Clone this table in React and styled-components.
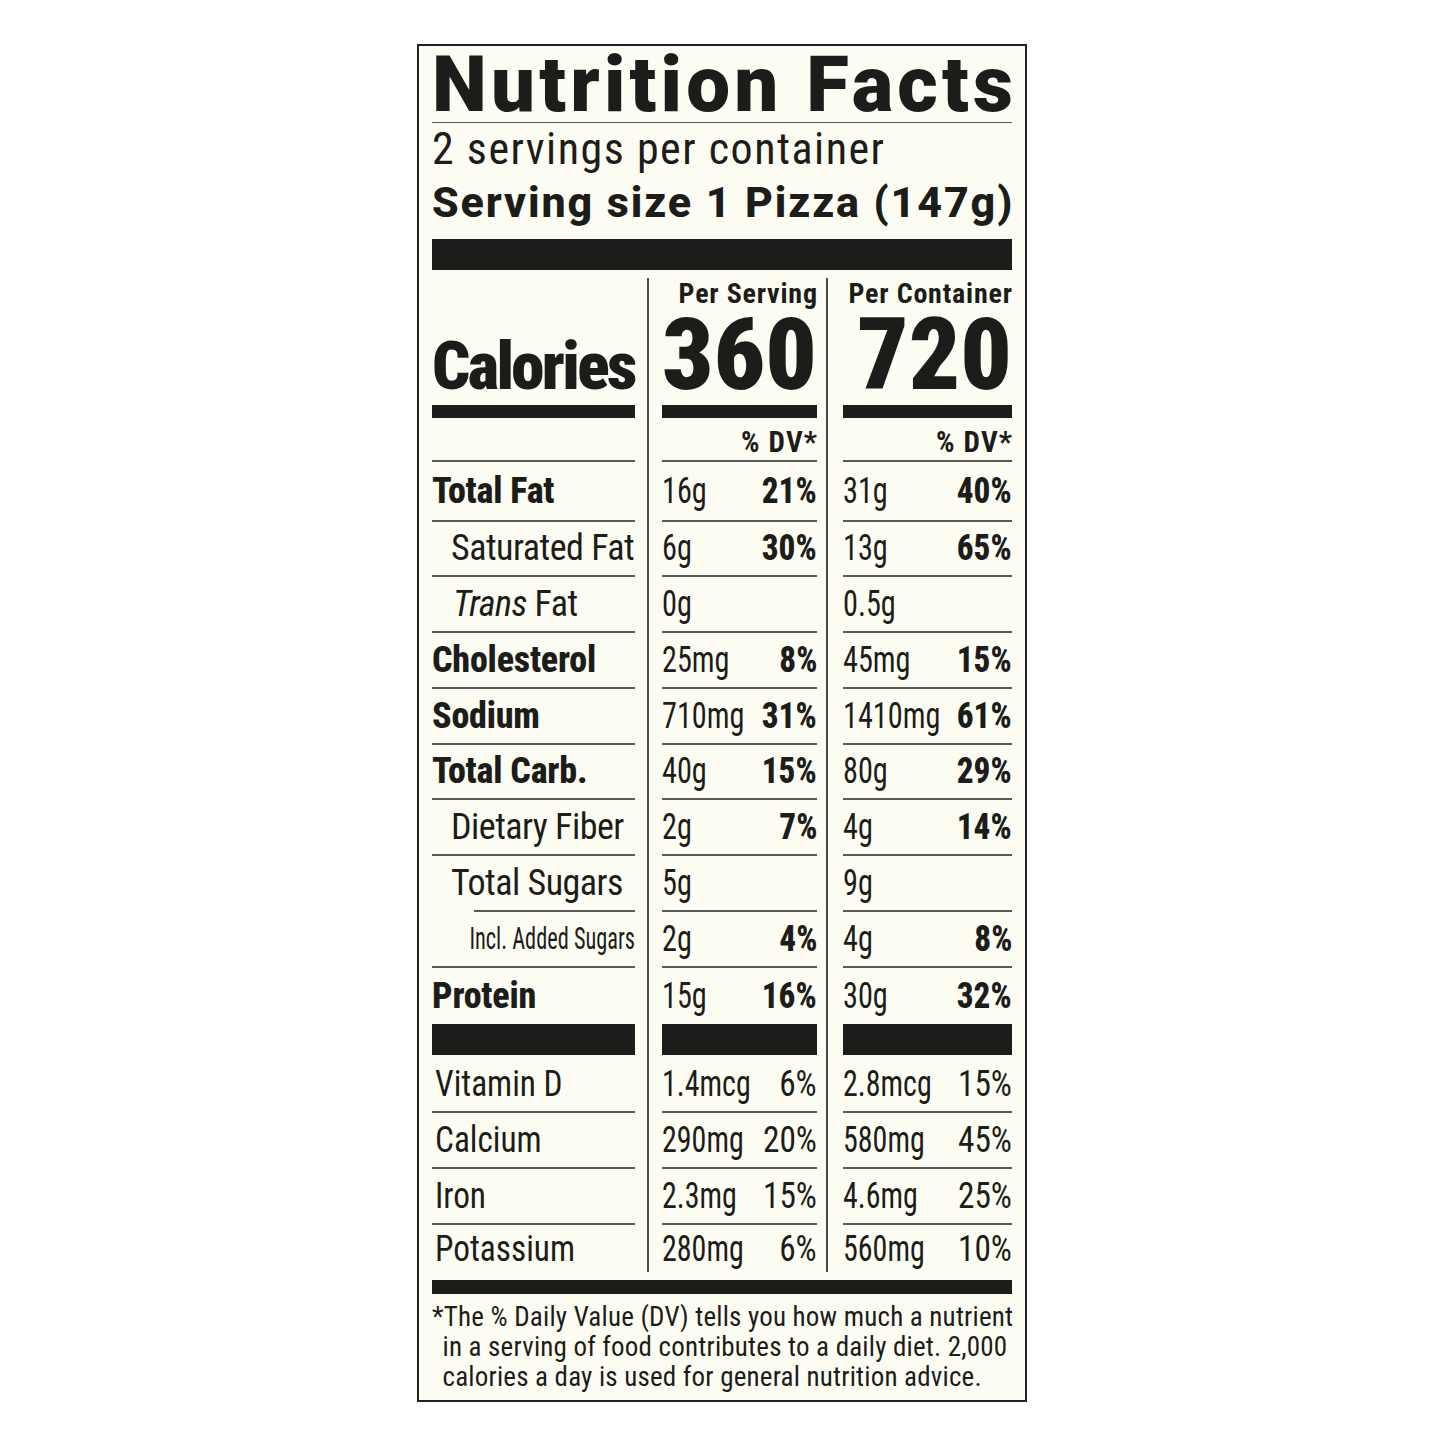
import React from "react";
import styled, { createGlobalStyle } from "styled-components";

const INK = "#1c1c1a";
const RULE = "#5a5a58";
const CREAM = "#fdfcf2";
const FONT = `Roboto, "Liberation Sans", Arial, sans-serif`;

const GlobalStyle = createGlobalStyle`
  html, body { margin: 0; padding: 0; background: #ffffff; }
  body { font-family: ${FONT}; color: ${INK}; }
`;

const Page = styled.main`
  display: flex;
  align-items: flex-start;
  padding: 44px 0 0 417px;
  min-height: 1445px;
  box-sizing: border-box;
`;

const Label = styled.section`
  width: 610px;
  box-sizing: border-box;
  border: 2px solid #222220;
  background: ${CREAM};
  padding: 2px 13px 7.5px;
  display: flex;
  flex-direction: column;
`;

const Title = styled.h1`
  margin: 0;
  font-family: ${FONT};
  font-size: 78px;
  line-height: 74px;
  font-weight: 900;
  font-stretch: 100%;
  letter-spacing: 4.2px;
  white-space: nowrap;
  border-bottom: 1.5px solid ${RULE};
`;

const Servings = styled.div`
  font-size: 44px;
  line-height: 53px;
  font-weight: 400;
  font-stretch: 75%;
  letter-spacing: 1.5px;
  white-space: nowrap;
`;

const ServingSize = styled.div`
  font-size: 43px;
  line-height: 52px;
  font-weight: 800;
  font-stretch: 100%;
  letter-spacing: 1.9px;
  white-space: nowrap;
`;

const Bar = styled.div`
  height: ${(p) => p.$h}px;
  margin-top: ${(p) => p.$mt || 0}px;
  background: ${INK};
  flex-shrink: 0;
  align-self: stretch;
  flex-grow: ${(p) => (p.$fill ? 1 : 0)};
`;

const Table = styled.div`
  display: grid;
  grid-template-columns: 203px 27px 155px 26px 169px;
  grid-template-rows: ${(p) => p.$rows};
`;

const Divider = styled.div`
  grid-column: ${(p) => p.$col} / span 1;
  grid-row: 1 / -1;
  justify-self: start;
  width: 2px;
  margin-left: ${(p) => p.$offset}px;
  margin-top: 8px;
  background: #4a4a48;
`;

const HeadCell = styled.div`
  grid-column: ${(p) => p.$col};
  display: flex;
  flex-direction: column;
  justify-content: flex-end;
  text-align: ${(p) => p.$align || "left"};
  white-space: nowrap;
`;

const ColTitle = styled.div`
  font-size: 28px;
  line-height: 27.5px;
  font-weight: 700;
  font-stretch: 75%;
  letter-spacing: 0.8px;
  margin-right: -0.8px;
`;

const BigNumber = styled.div`
  font-size: 101px;
  line-height: 96px;
  font-weight: 900;
  font-stretch: 75%;
`;

const CaloriesWord = styled.div`
  font-size: 67px;
  line-height: 70px;
  font-weight: 900;
  font-stretch: 75%;
  letter-spacing: -2.6px;
`;

const Cell = styled.div`
  grid-column: ${(p) => p.$col};
  display: flex;
  align-items: ${(p) => p.$alignY || "center"};
  justify-content: ${(p) => p.$justify || "flex-start"};
  padding-left: ${(p) => p.$indent || 0}px;
  padding-bottom: ${(p) => (p.$rule ? 2 : 0) + (p.$pb || 0)}px;
  box-sizing: border-box;
  min-width: 0;
  white-space: nowrap;
  background: ${(p) =>
    p.$rule
      ? `linear-gradient(${RULE}, ${RULE}) no-repeat ${p.$ruleInset || 0}px 100% / calc(100% - ${p.$ruleInset || 0}px) 2px`
      : "none"};
`;

const DVHead = styled.span`
  font-size: 29px;
  line-height: 26px;
  font-weight: 700;
  font-stretch: 75%;
  letter-spacing: 1.2px;
  margin-right: -1.2px;
`;

const Name = styled.span`
  font-size: ${(p) => (p.$vit ? 37 : 36)}px;
  line-height: 1;
  font-weight: ${(p) => (p.$bold ? 800 : 400)};
  font-stretch: 75%;
  letter-spacing: ${(p) => (p.$bold ? "-0.2px" : p.$vit ? "0" : "-0.5px")};
  transform: scaleX(${(p) => (p.$vit ? 0.9 : 1)});
  transform-origin: left center;
`;

const SubName = styled.span`
  display: inline-block;
  font-size: 31px;
  line-height: 1;
  font-weight: 400;
  font-stretch: 75%;
  transform: scaleX(0.72);
  transform-origin: right center;
`;

const Amount = styled.span`
  flex: 0 1 auto;
  min-width: 0;
  font-size: ${(p) => (p.$vit ? 37 : 36)}px;
  line-height: 1;
  font-weight: 400;
  font-stretch: 75%;
  transform: scaleX(${(p) => (p.$vit ? 0.81 : 0.84)});
  transform-origin: left center;
`;

const Percent = styled.span`
  flex: 0 0 auto;
  font-size: ${(p) => (p.$vit ? 37 : 36)}px;
  line-height: 1;
  font-weight: ${(p) => (p.$vit ? 400 : 800)};
  font-stretch: 75%;
  transform: scaleX(${(p) => (p.$vit ? 0.9 : 0.92)});
  transform-origin: right center;
`;

const Footnote = styled.p`
  margin: 8.5px 0 0;
  font-size: 27px;
  line-height: 30px;
  font-weight: 400;
  font-stretch: 75%;
  letter-spacing: 0.2px;
  padding-left: 10.5px;
  text-indent: -10.5px;
  white-space: nowrap;
`;

const nutrients = [
  { label: "Total Fat", bold: true, s: ["16g", "21%"], c: ["31g", "40%"], h: 60 },
  { label: "Saturated Fat", indent: 19, s: ["6g", "30%"], c: ["13g", "65%"] },
  {
    label: (
      <>
        <i>Trans</i> Fat
      </>
    ),
    indent: 21,
    s: ["0g", ""],
    c: ["0.5g", ""],
  },
  { label: "Cholesterol", bold: true, s: ["25mg", "8%"], c: ["45mg", "15%"] },
  { label: "Sodium", bold: true, s: ["710mg", "31%"], c: ["1410mg", "61%"] },
  { label: "Total Carb.", bold: true, s: ["40g", "15%"], c: ["80g", "29%"] },
  { label: "Dietary Fiber", indent: 19, s: ["2g", "7%"], c: ["4g", "14%"] },
  { label: "Total Sugars", indent: 19, s: ["5g", ""], c: ["9g", ""], ruleInset: 42 },
  { label: "Incl. Added Sugars", sub: true, s: ["2g", "4%"], c: ["4g", "8%"] },
  { label: "Protein", bold: true, s: ["15g", "16%"], c: ["30g", "32%"], h: 56, noRule: true },
];

const vitamins = [
  { label: "Vitamin D", s: ["1.4mcg", "6%"], c: ["2.8mcg", "15%"], h: 57 },
  { label: "Calcium", s: ["290mg", "20%"], c: ["580mg", "45%"], h: 56 },
  { label: "Iron", s: ["2.3mg", "15%"], c: ["4.6mg", "25%"], h: 56 },
  { label: "Potassium", s: ["280mg", "6%"], c: ["560mg", "10%"], h: 47, noRule: true },
];

const rowHeights = [
  148,
  44,
  ...nutrients.map((n) => n.h || 55.75),
  32,
  ...vitamins.map((v) => v.h),
];

function ValueCell({ col, pair, vit, rule }) {
  return (
    <Cell $col={col} $justify="space-between" $rule={rule}>
      <Amount $vit={vit}>{pair[0]}</Amount>
      {pair[1] && <Percent $vit={vit}>{pair[1]}</Percent>}
    </Cell>
  );
}

export default function App() {
  return (
    <Page>
      <GlobalStyle />
      <Label>
        <Title>Nutrition Facts</Title>
        <Servings>2 servings per container</Servings>
        <ServingSize>Serving size 1 Pizza (147g)</ServingSize>
        <Bar $h={31} $mt={10.5} />

        <Table $rows={rowHeights.map((h) => `${h}px`).join(" ")}>
          <Divider $col={2} $offset={12} />
          <Divider $col={4} $offset={9} />

          <HeadCell $col={1}>
            <CaloriesWord>Calories</CaloriesWord>
            <Bar $h={13} $mt={4} />
          </HeadCell>
          <HeadCell $col={3} $align="right">
            <ColTitle>Per Serving</ColTitle>
            <BigNumber>360</BigNumber>
            <Bar $h={13} $mt={1.5} />
          </HeadCell>
          <HeadCell $col={5} $align="right">
            <ColTitle>Per Container</ColTitle>
            <BigNumber>720</BigNumber>
            <Bar $h={13} $mt={1.5} />
          </HeadCell>

          <Cell $col={1} $rule />
          <Cell $col={3} $rule $alignY="flex-end" $justify="flex-end" $pb={5}>
            <DVHead>% DV*</DVHead>
          </Cell>
          <Cell $col={5} $rule $alignY="flex-end" $justify="flex-end" $pb={5}>
            <DVHead>% DV*</DVHead>
          </Cell>

          {nutrients.map((n, i) => (
            <React.Fragment key={i}>
              <Cell
                $col={1}
                $indent={n.indent}
                $rule={!n.noRule}
                $ruleInset={n.ruleInset}
                $justify={n.sub ? "flex-end" : "flex-start"}
              >
                {n.sub ? <SubName>{n.label}</SubName> : <Name $bold={n.bold}>{n.label}</Name>}
              </Cell>
              <ValueCell col={3} pair={n.s} rule={!n.noRule} />
              <ValueCell col={5} pair={n.c} rule={!n.noRule} />
            </React.Fragment>
          ))}

          <Cell $col={1} $alignY="flex-end">
            <Bar $h={31} $fill />
          </Cell>
          <Cell $col={3} $alignY="flex-end">
            <Bar $h={31} $fill />
          </Cell>
          <Cell $col={5} $alignY="flex-end">
            <Bar $h={31} $fill />
          </Cell>

          {vitamins.map((v, i) => (
            <React.Fragment key={i}>
              <Cell $col={1} $indent={3} $rule={!v.noRule}>
                <Name $vit>{v.label}</Name>
              </Cell>
              <ValueCell col={3} pair={v.s} vit rule={!v.noRule} />
              <ValueCell col={5} pair={v.c} vit rule={!v.noRule} />
            </React.Fragment>
          ))}
        </Table>

        <Bar $h={14} $mt={8} />
        <Footnote>
          *The % Daily Value (DV) tells you how much a nutrient
          <br />
          in a serving of food contributes to a daily diet. 2,000
          <br />
          calories a day is used for general nutrition advice.
        </Footnote>
      </Label>
    </Page>
  );
}
